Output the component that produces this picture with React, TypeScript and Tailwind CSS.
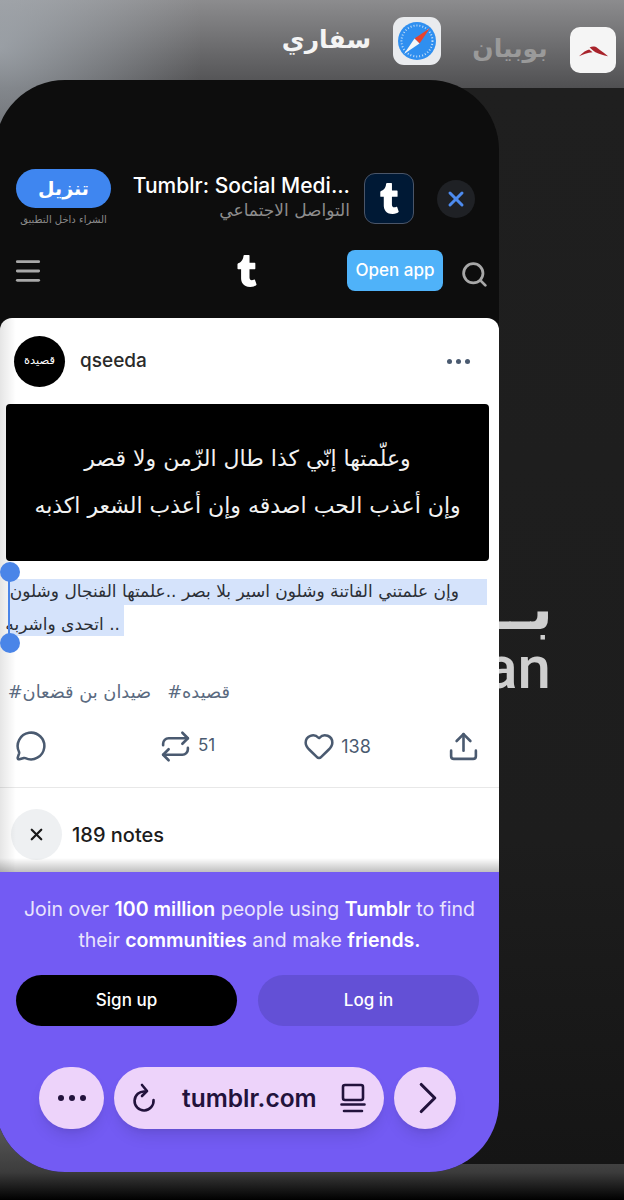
import { Heart, MessageCircle, Repeat, Search, Upload, X, ChevronRight, Menu } from 'lucide-react';
import { FaTumblr } from 'react-icons/fa';

const latin = "font-['Inter','Noto_Sans',sans-serif]";
const arabic = "font-['DejaVu_Sans','Noto_Sans',sans-serif]";

function SafariIcon() {
  return (
    <svg viewBox="0 0 48 48" className="h-[48px] w-[48px] rounded-[11px]">
      <rect width="48" height="48" fill="#e9ebee" />
      <circle cx="24" cy="24" r="19" fill="#2f8ff0" />
      <circle cx="24" cy="24" r="15.5" fill="none" stroke="#bfdcf8" strokeWidth="2" strokeDasharray="1 2" />
      <path d="M37 11 L21.5 21.5 L26.5 26.5 Z" fill="#e8432e" />
      <path d="M11 37 L21.5 21.5 L26.5 26.5 Z" fill="#f4f6f8" />
    </svg>
  );
}

function BankIcon() {
  return (
    <div className="flex h-[46px] w-[46px] items-center justify-center rounded-[10px] bg-[#f5f5f5]">
      <svg viewBox="0 0 32 12" className="mt-[3px] w-[31px]">
        <path d="M1 10.5 C5 6.5 9 4 11.5 3.5 C13 4.5 14 5.5 15 6.5 C10 7 5 9 1 10.5 Z" fill="#a8232b" />
        <path d="M12 1.5 C15 0 18 0.5 20 2 C24 5 28 8 31 10.5 C26 9.5 22 8.5 18 6.5 C15.5 5 13.5 2.5 12 1.5 Z" fill="#a8232b" />
      </svg>
    </div>
  );
}

function SmartBanner() {
  return (
    <div dir="ltr" className="flex h-[62px] items-start pl-[16px]">
      <div className="flex w-[95px] flex-col items-center">
        <div className={`flex h-[39px] w-[95px] items-center justify-center rounded-full bg-[#3f86f0] text-[19px] font-bold text-white ${arabic}`}>
          تنزيل
        </div>
        <div dir="rtl" className={`mt-[6px] whitespace-nowrap text-[10px] leading-[12px] text-[#8b8b8b] ${arabic}`}>
          الشراء داخل التطبيق
        </div>
      </div>
      <div className="ml-[22px] flex w-[217px] flex-col items-end pt-[3px]">
        <div className={`whitespace-nowrap text-[21px] font-medium leading-[28px] text-white ${latin}`}>Tumblr: Social Medi...</div>
        <div dir="rtl" className={`whitespace-nowrap text-[17px] leading-[20px] text-[#8e8e8e] ${arabic}`}>التواصل الاجتماعي</div>
      </div>
      <div className="ml-[14px] mt-[4px] flex h-[51px] w-[50px] items-center justify-center rounded-[11px] border border-[#4a5568] bg-[#001935] text-white">
        <FaTumblr size={31} />
      </div>
      <div className="ml-[23px] mt-[11px] flex h-[38px] w-[38px] items-center justify-center rounded-full bg-[#1f2125] text-[#4d8bef]">
        <X size={24} strokeWidth={3} />
      </div>
    </div>
  );
}

function NavBar() {
  return (
    <div className="mt-[19px] flex h-[41px] items-center pl-[12px] text-[#a8a8a8]">
      <Menu size={32} strokeWidth={2.1} />
      <div className="ml-[187px] text-white">
        <FaTumblr size={32} />
      </div>
      <div className={`ml-[84px] flex h-[41px] w-[96px] items-center justify-center rounded-[8px] bg-[#4fb2f9] text-[17px] font-medium text-white ${latin}`}>
        Open app
      </div>
      <Search size={29} strokeWidth={2.3} className="ml-[17px] mt-[7px]" />
    </div>
  );
}

function PostCard() {
  return (
    <div className="relative h-[554px] overflow-hidden rounded-t-[12px] bg-white">
      <div className="absolute inset-y-0 left-0 w-[16px] bg-gradient-to-r from-black/10 to-transparent" />
      <div className="relative flex h-[86px] items-center pl-[14px] pr-[29px]">
        <div className={`flex h-[51px] w-[51px] items-center justify-center rounded-full bg-black text-[11.5px] text-white ${arabic}`}>قصيدة</div>
        <span className={`ml-[15px] text-[19px] font-medium text-[#2a2a2a] ${latin}`}>qseeda</span>
        <div className="ml-auto flex gap-[4px]">
          <i className="h-[5px] w-[5px] rounded-full bg-[#4a5a70]" />
          <i className="h-[5px] w-[5px] rounded-full bg-[#4a5a70]" />
          <i className="h-[5px] w-[5px] rounded-full bg-[#4a5a70]" />
        </div>
      </div>

      <div dir="rtl" className={`relative ml-[6px] flex h-[157px] w-[483px] flex-col items-center justify-center gap-[7px] rounded-[4px] bg-black text-[22px] leading-[40px] text-[#f2f2f2] ${arabic}`}>
        <div>وعلّمتها إنّي كذا طال الزّمن ولا قصر</div>
        <div>وإن أعذب الحب اصدقه وإن أعذب الشعر اكذبه</div>
      </div>

      <div dir="rtl" className={`relative ml-[9px] mt-[18px] w-[478px] text-[17px] text-[#2b2f36] ${arabic}`}>
        <div className="flex h-[26px] items-center whitespace-nowrap bg-[#d5e3fb] pr-[28px]">وإن علمتني الفاتنة وشلون اسير بلا بصر ..علمتها الفنجال وشلون</div>
        <div className="mr-auto flex h-[31px] w-[115px] items-center whitespace-nowrap bg-[#d5e3fb] pr-[4px] pt-[8px]">.. اتحدى واشربه</div>
      </div>
      <div className="absolute left-0 top-[244px] h-[91px] w-[20px]">
        <div className="absolute left-[8px] top-[8px] h-[74px] w-[2px] bg-[#4a85e8]" />
        <div className="absolute left-0 top-0 h-[20px] w-[20px] rounded-full bg-[#4a85e8]" />
        <div className="absolute bottom-0 left-0 h-[20px] w-[20px] rounded-full bg-[#4a85e8]" />
      </div>

      <div dir="rtl" className={`relative ml-[9px] mt-[42px] flex h-[28px] w-[221px] items-center gap-[16px] whitespace-nowrap text-[17.8px] text-[#5a6a80] ${arabic}`}>
        <span>قصيده#</span>
        <span>ضيدان بن قضعان#</span>
      </div>

      <div className={`relative mt-[21px] flex h-[38px] items-center pl-[15px] pr-[15px] text-[#4a5a70] ${latin}`}>
        <MessageCircle size={32} strokeWidth={1.9} />
        <Repeat size={33} strokeWidth={1.9} className="ml-[112px]" />
        <span className="ml-[6px] text-[17px]">51</span>
        <Heart size={32} strokeWidth={1.9} className="ml-[88px]" />
        <span className="ml-[6px] text-[18px]">138</span>
        <Upload size={33} strokeWidth={1.9} className="ml-auto mr-[4px]" />
      </div>

      <div className="mt-[22px] h-px bg-[#e8e8e8]" />

      <div className="mt-[21px] flex items-center pl-[11px]">
        <div className="flex h-[51px] w-[51px] items-center justify-center rounded-full bg-[#eef0f2] text-[#1a1a1a]">
          <X size={19} strokeWidth={2.8} />
        </div>
        <span className={`ml-[10px] text-[20px] font-medium text-[#1c1c1c] ${latin}`}>189 notes</span>
      </div>
      <div className="absolute inset-x-0 bottom-0 h-[14px] bg-gradient-to-t from-black/25 to-transparent" />
    </div>
  );
}

function SignupPanel() {
  return (
    <div className={`flex-1 bg-[#735bf3] ${latin}`}>
      <p className="mx-auto mt-[22px] w-[480px] text-center text-[19.5px] leading-[31px] text-[#e9e4fd]">
        Join over <b className="font-semibold text-white">100 million</b> people using <b className="font-semibold text-white">Tumblr</b> to find
        <br />
        their <b className="font-semibold text-white">communities</b> and make <b className="font-semibold text-white">friends.</b>
      </p>
      <div className="mt-[19px] flex gap-[21px] pl-[16px] text-[17px] font-medium text-white">
        <div className="flex h-[51px] w-[221px] items-center justify-center rounded-full bg-black">Sign up</div>
        <div className="flex h-[51px] w-[221px] items-center justify-center rounded-full bg-[#6350d6]">Log in</div>
      </div>
      <div className="ml-[39px] mt-[41px] flex h-[62px] gap-[10px] text-[#22123c]">
        <div className="flex w-[65px] items-center justify-center gap-[5px] rounded-full bg-[#edd3fa] shadow-lg shadow-black/10">
          <i className="h-[6px] w-[6px] rounded-full bg-[#22123c]" />
          <i className="h-[6px] w-[6px] rounded-full bg-[#22123c]" />
          <i className="h-[6px] w-[6px] rounded-full bg-[#22123c]" />
        </div>
        <div className="flex w-[270px] items-center rounded-full bg-[#edd3fa] pl-[17px] shadow-lg shadow-black/10">
          <svg viewBox="0 0 26 32" className="h-[32px] w-[26px]" fill="none" stroke="currentColor" strokeWidth="2.6" strokeLinecap="round" strokeLinejoin="round">
            <path d="M14 9.5 A9.5 9.5 0 1 0 22.5 18" />
            <path d="M11 3 L16 9 L11 14" />
          </svg>
          <span className="ml-[25px] text-[24.5px] font-semibold">tumblr.com</span>
          <svg viewBox="0 0 26 30" className="ml-[23px] h-[30px] w-[26px]" fill="none" stroke="currentColor" strokeWidth="2.6" strokeLinecap="round">
            <rect x="3" y="2" width="20" height="15" rx="2" />
            <path d="M1.5 21.5 H24.5 M4 28 H22" />
          </svg>
        </div>
        <div className="flex w-[62px] items-center justify-center rounded-full bg-[#edd3fa] shadow-lg shadow-black/10">
          <ChevronRight size={54} strokeWidth={1.4} className="ml-[6px] shrink-0" />
        </div>
      </div>
    </div>
  );
}

export default function App() {
  return (
    <div className="relative h-[1200px] w-[624px] overflow-hidden bg-[linear-gradient(180deg,#8c8c8e_0px,#505052_88px,#47474a_140px,#5c5c5c_1120px,#3c3c3c_1172px,#000000_1200px)]">
      {/* light corner at the top left of the switcher */}
      <div className="absolute left-0 top-0 h-[240px] w-[200px] bg-[radial-gradient(ellipse_at_0%_20%,rgba(178,186,194,0.65)_0%,rgba(178,186,194,0.3)_40%,transparent_72%)]" />
      <div className="absolute left-[283px] top-[17px] flex items-start">
        <span dir="rtl" className={`mt-[3px] w-[88px] whitespace-nowrap text-center text-[25px] font-bold leading-[40px] text-[#f4f4f4] ${arabic}`}>سفاري</span>
        <div className="ml-[22px]">
          <SafariIcon />
        </div>
      </div>
      <div className="absolute left-[472px] top-[27px] flex items-start">
        <span dir="rtl" className={`mt-[2px] w-[76px] whitespace-nowrap text-center text-[25px] font-bold leading-[40px] text-[#9a9a9a] ${arabic}`}>بوبيان</span>
        <div className="ml-[22px]">
          <BankIcon />
        </div>
      </div>

      {/* window behind */}
      <div className="absolute left-[300px] top-[88px] h-[1076px] w-[395px] rounded-[70px] bg-[linear-gradient(180deg,#1f1f1f_0%,#1d1d1d_70%,#151515_100%)]">
        <div dir="rtl" className={`absolute right-[142px] top-[490px] whitespace-nowrap text-[60px] font-bold leading-[60px] text-[#cfcfcf] ${arabic}`}>بــــ</div>
        <div className="absolute right-[144px] top-[555px] font-['Roboto',sans-serif] text-[60px] font-medium leading-[50px] text-[#cfcfcf]">an</div>
      </div>

      {/* front window */}
      <div className="absolute left-[-5px] top-[80px] flex h-[1092px] w-[504px] flex-col overflow-hidden rounded-[70px] bg-[#0d0d0d] pl-[5px]">
        <div className="mt-[89px]">
          <SmartBanner />
          <NavBar />
        </div>
        <div className="mt-[27px]">
          <PostCard />
        </div>
        <SignupPanel />
      </div>
    </div>
  );
}
